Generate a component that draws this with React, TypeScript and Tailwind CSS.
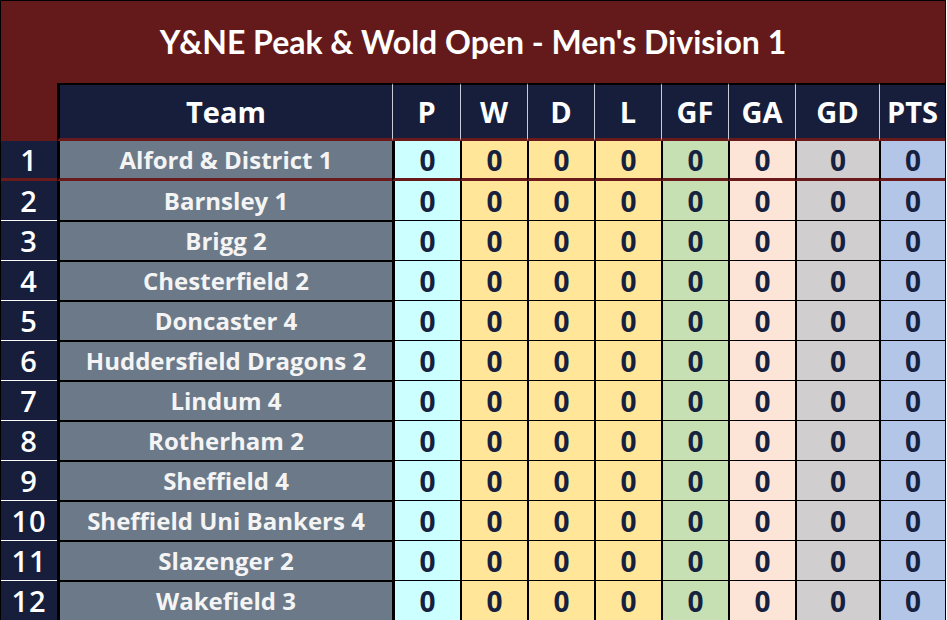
import React from 'react';

const teams = [
  'Alford & District 1',
  'Barnsley 1',
  'Brigg 2',
  'Chesterfield 2',
  'Doncaster 4',
  'Huddersfield Dragons 2',
  'Lindum 4',
  'Rotherham 2',
  'Sheffield 4',
  'Sheffield Uni Bankers 4',
  'Slazenger 2',
  'Wakefield 3',
];

type Col = { label: string; width: string; bg: string; edge: string };

const columns: Col[] = [
  { label: 'P', width: 'w-[68px]', bg: 'bg-[#ccffff]', edge: 'border-l-[3px]' },
  { label: 'W', width: 'w-[67px]', bg: 'bg-[#ffe699]', edge: 'border-l-2' },
  { label: 'D', width: 'w-[67px]', bg: 'bg-[#ffe699]', edge: 'border-l-2' },
  { label: 'L', width: 'w-[67px]', bg: 'bg-[#ffe699]', edge: 'border-l-2' },
  { label: 'GF', width: 'w-[67px]', bg: 'bg-[#c6e0b4]', edge: 'border-l-2' },
  { label: 'GA', width: 'w-[67px]', bg: 'bg-[#fce4d6]', edge: 'border-l-2' },
  { label: 'GD', width: 'w-[84px]', bg: 'bg-[#d0cece]', edge: 'border-l-2' },
  { label: 'PTS', width: 'w-[66px]', bg: 'bg-[#b4c6e7]', edge: 'border-l-2' },
];

const openSans = { fontFamily: '"Open Sans", "Noto Sans", sans-serif' };
const lato = { fontFamily: 'Lato, "Open Sans", sans-serif' };

function HeaderRow() {
  return (
    <div className="flex h-[58px]">
      <div className="w-[56px] shrink-0" />
      <div className="w-[335px] shrink-0 flex items-center justify-center bg-[#161e3c] border-l-[3px] border-l-black border-t-2 border-t-black border-b-[3px] border-b-[#6a1a1a] text-white text-[29px] font-bold">
        Team
      </div>
      {columns.map((col) => (
        <div
          key={col.label}
          className={`${col.width} shrink-0 flex items-center justify-center bg-[#161e3c] border-l border-l-[#c9ccd6] border-t-2 border-t-black border-b-[3px] border-b-[#6a1a1a] text-white text-[29px] font-bold`}
        >
          {col.label}
        </div>
      ))}
    </div>
  );
}

function TeamRow({ rank, name }: { rank: number; name: string }) {
  const first = rank === 1;
  const second = rank === 2;
  const height = second ? 'h-[39px]' : 'h-[40px]';
  const rankBorder = first ? 'border-b-[3px] border-b-[#6a1a1a]' : second ? '' : 'border-t border-t-white';
  const teamBorder = first ? 'border-b-[3px] border-b-[#6a1a1a]' : second ? '' : 'border-t-2 border-t-black';
  const statBorder = first ? 'border-b-[3px] border-b-[#6a1a1a]' : second ? '' : 'border-t border-t-black';

  return (
    <div className={`flex ${height}`}>
      <div className={`w-[56px] shrink-0 flex items-center justify-center bg-[#161e3c] text-white text-[29px] font-semibold tracking-[1px] ${rankBorder}`}>
        {rank}
      </div>
      <div className={`w-[335px] shrink-0 flex items-center justify-center bg-[#6b7989] border-l-[3px] border-l-black text-[#f4f4f4] text-[24px] font-bold ${teamBorder}`}>
        {name}
      </div>
      {columns.map((col) => (
        <div
          key={col.label}
          className={`${col.width} shrink-0 flex items-center justify-center ${col.bg} ${col.edge} border-l-black text-[#16203f] text-[28px] font-bold ${statBorder}`}
        >
          0
        </div>
      ))}
    </div>
  );
}

export default function App() {
  return (
    <div className="w-[947px] h-[620px] bg-white overflow-hidden" style={openSans}>
      <div className="w-[946px] h-[620px] bg-[#641a1a] border-t border-l border-r border-black overflow-hidden">
        <div className="h-[82px] flex items-center justify-center text-white text-[32px] font-bold" style={lato}>
          Y&amp;NE Peak &amp; Wold Open - Men's Division 1
        </div>
        <HeaderRow />
        {teams.map((name, i) => (
          <TeamRow key={name} rank={i + 1} name={name} />
        ))}
      </div>
    </div>
  );
}
